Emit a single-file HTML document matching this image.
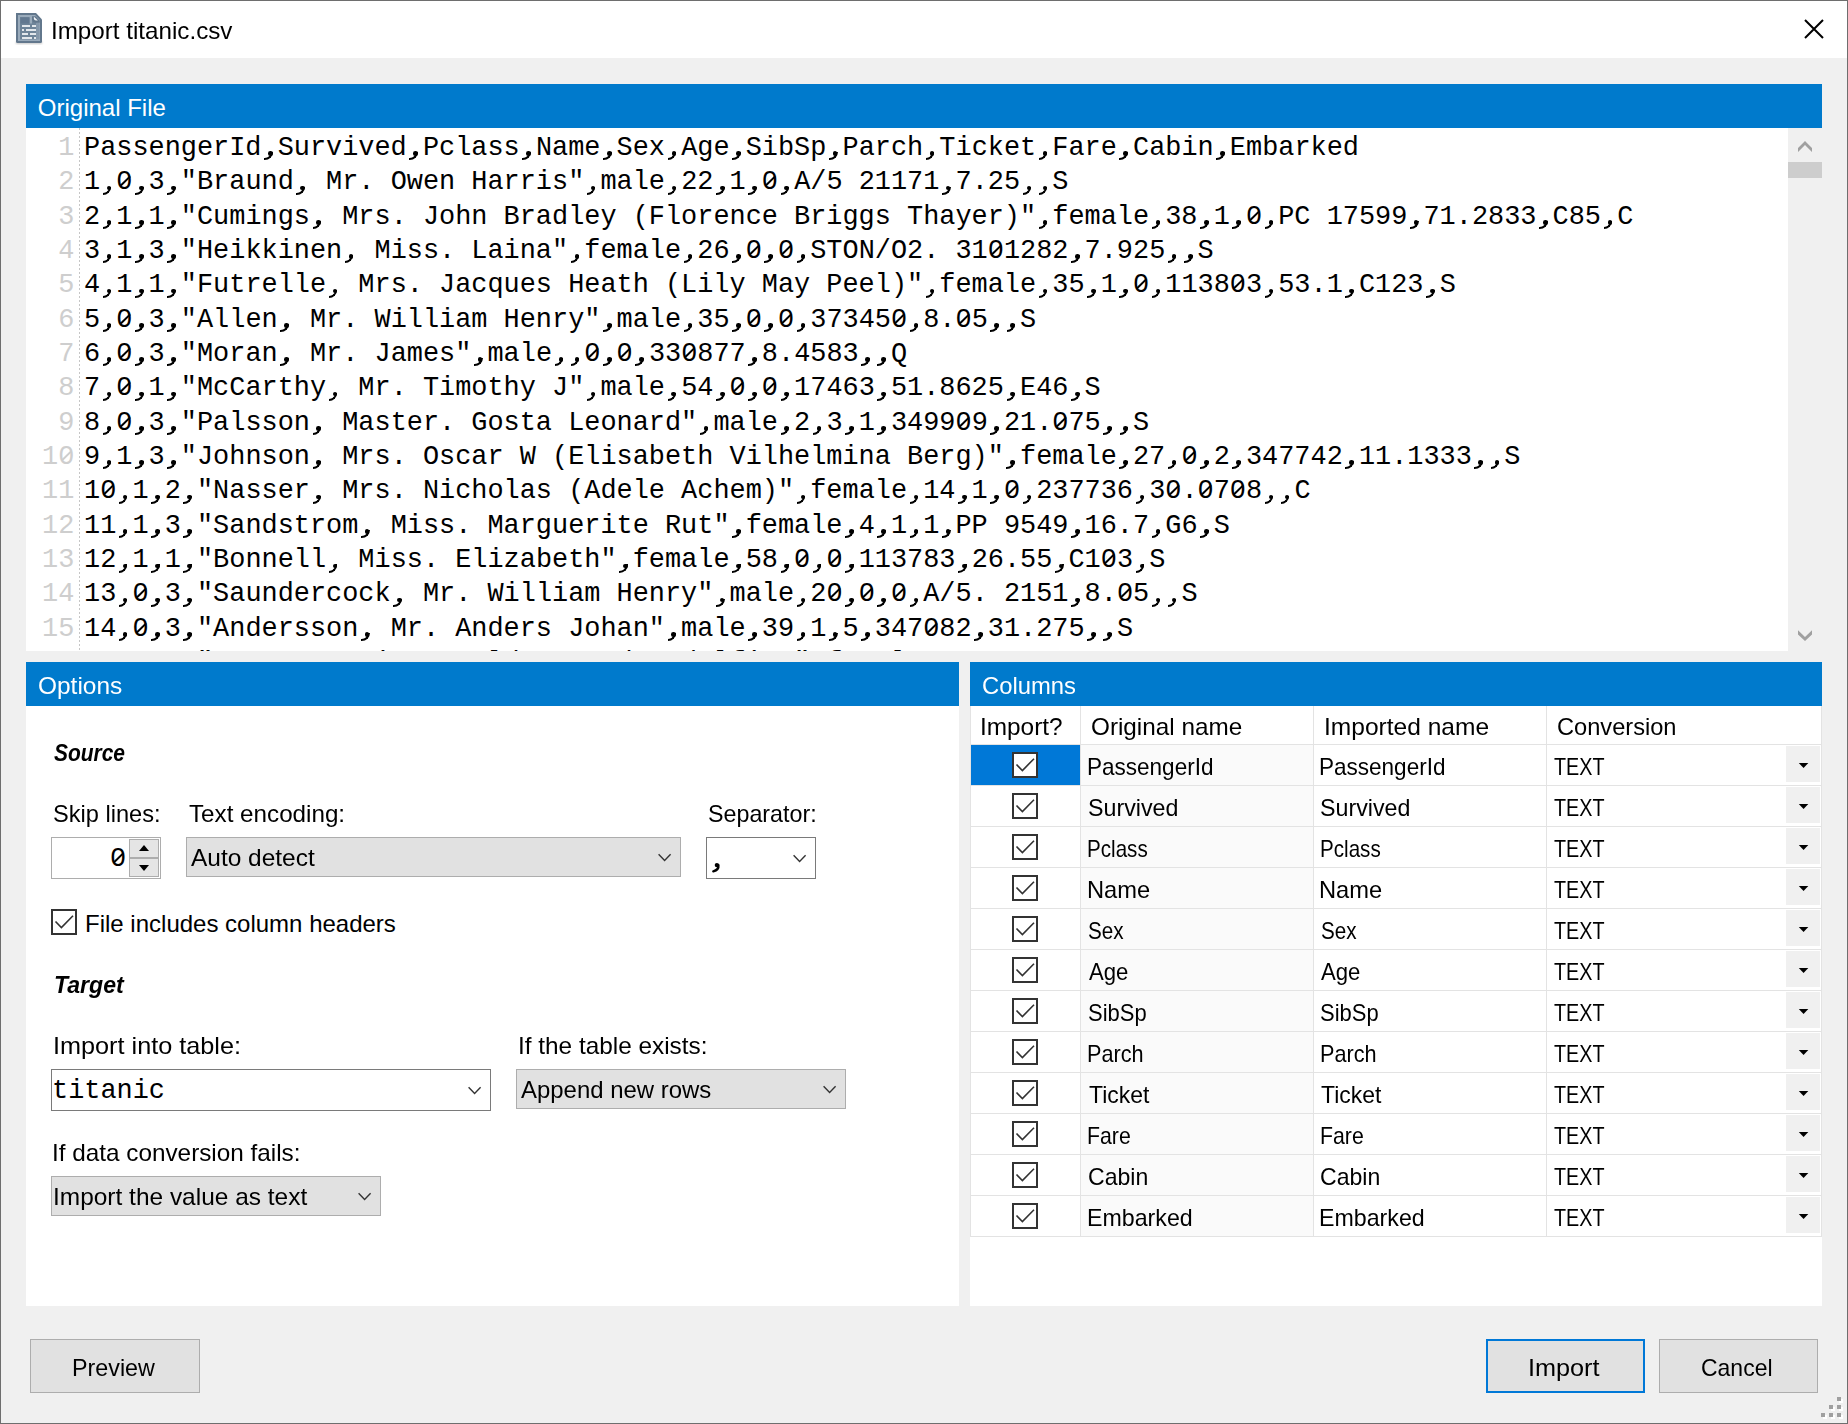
<!DOCTYPE html><html><head><meta charset="utf-8"><style>
*{margin:0;padding:0;box-sizing:border-box}
html,body{width:1848px;height:1424px;overflow:hidden;background:#f0f0f0}
.b{position:absolute}
.t{position:absolute;font-family:"Liberation Sans",sans-serif;font-size:24px;line-height:24px;white-space:nowrap;color:#000}
.m{position:absolute;font-family:"Liberation Mono",monospace;font-size:26.9px;line-height:34.34px;white-space:pre;color:#000}
.w{color:#fff}
.bi{font-weight:bold;font-style:italic}
.z{font-style:normal;position:relative}
.z::before{content:"";position:absolute;left:5.8px;top:9.6px;width:4.8px;height:6px;background:#fff}
.z::after{content:"";position:absolute;left:2.3px;top:12.95px;width:12.8px;height:2px;background:currentColor;transform:rotate(-44.5deg)}
.c{font-style:normal;position:relative;color:transparent}
.c::before{content:"";position:absolute;left:6.5px;top:18.4px;width:4.6px;height:4.6px;border-radius:50%;background:#000}
.c::after{content:"";position:absolute;left:2.6px;top:19.2px;width:8.6px;height:8.2px;box-sizing:border-box;border-right:2.5px solid #000;border-bottom:2.3px solid #000;border-bottom-right-radius:100% 100%}
</style></head><body><div class="b" style="left:0px;top:0px;width:1848px;height:1424px;border:1px solid #6e6e6e;background:#f0f0f0"></div>
<div class="b" style="left:1px;top:1px;width:1846px;height:57px;background:#fff"></div>
<svg class="b" style="left:0px;top:0px" width="50" height="50" viewBox="0 0 50 50">
<defs><filter id="sh" x="-20%" y="-20%" width="140%" height="140%"><feGaussianBlur stdDeviation="0.9"/></filter></defs>
<rect x="16" y="41" width="26" height="3" fill="#000" opacity="0.22" filter="url(#sh)"/>
<path d="M16 13 H36 L42 19.5 V41.5 Q42 43 40.5 43 H17.5 Q16 43 16 41.5 Z" fill="#62778c"/>
<path d="M18 15 H35.2 L40 20.2 V41 H18 Z" fill="#9aabbb"/>
<rect x="20" y="17" width="16.5" height="22.5" fill="#6e8499"/>
<rect x="36.5" y="23" width="3" height="16.5" fill="#8497aa"/>
<rect x="29.5" y="17" width="2.5" height="6.5" fill="#9aabbb"/>
<rect x="20.5" y="17.5" width="9" height="6" fill="#627890"/>
<path d="M32 16.3 H35.5 L39.8 20.8 V22.8 H36.5 Q32 22.8 32 18.5 Z" fill="#62778c"/>
<path d="M33.9 16.8 L37.9 20.6 H36 Q33.9 20.6 33.9 18.5 Z" fill="#f2f5f8"/>
<g fill="#e2e7ec">
<rect x="22" y="25" width="8" height="2"/><rect x="32" y="25" width="4" height="2"/>
<rect x="22" y="29" width="2" height="2"/><rect x="26" y="29" width="10" height="2"/>
<rect x="22" y="33" width="6" height="2"/><rect x="30" y="33" width="6" height="2"/>
<rect x="22" y="37" width="10" height="2"/><rect x="34" y="37" width="2" height="2"/></g>
</svg>
<div class="t " style="left:50.73px;top:19.00px;transform:scaleX(1.0077);transform-origin:0 0;">Import titanic.csv</div>
<svg class="b" style="left:1804px;top:19px" width="20" height="20" viewBox="0 0 20 20"><path d="M1 1L19 19M19 1L1 19" stroke="#000" stroke-width="2"/></svg>
<div class="b" style="left:26px;top:84px;width:1796px;height:44px;background:#007acc"></div>
<div class="t w" style="left:37.83px;top:96.00px;">Original File</div>
<div class="b" style="left:26px;top:128px;width:1762px;height:523px;background:#fff"></div>
<div class="b" style="left:1788px;top:128px;width:34px;height:523px;background:#f0f0f0"></div>
<svg class="b" style="left:1790px;top:135px" width="30" height="24" viewBox="1790 135 30 24"><path d="M1798 148L1805 141L1812 148V152L1805 145L1798 152Z" fill="#a0a0a0"/></svg>
<div class="b" style="left:1788px;top:162px;width:34px;height:16px;background:#cdcdcd"></div>
<svg class="b" style="left:1790px;top:625px" width="30" height="24" viewBox="1790 625 30 24"><path d="M1798 630.2L1805 637L1812 630.2V634.4L1805 641L1798 634.4Z" fill="#a0a0a0"/></svg>
<div class="b" style="left:26px;top:128px;width:1762px;height:523px;overflow:hidden">
<div class="m" style="left:16px;top:3px;color:#cecece"> 1
 2
 3
 4
 5
 6
 7
 8
 9
1<i class="z">0</i>
11
12
13
14
15
16</div>
<div class="m" style="left:58px;top:3px">PassengerId<i class="c">,</i>Survived<i class="c">,</i>Pclass<i class="c">,</i>Name<i class="c">,</i>Sex<i class="c">,</i>Age<i class="c">,</i>SibSp<i class="c">,</i>Parch<i class="c">,</i>Ticket<i class="c">,</i>Fare<i class="c">,</i>Cabin<i class="c">,</i>Embarked
1<i class="c">,</i><i class="z">0</i><i class="c">,</i>3<i class="c">,</i>&quot;Braund<i class="c">,</i> Mr. Owen Harris&quot;<i class="c">,</i>male<i class="c">,</i>22<i class="c">,</i>1<i class="c">,</i><i class="z">0</i><i class="c">,</i>A/5 21171<i class="c">,</i>7.25<i class="c">,</i><i class="c">,</i>S
2<i class="c">,</i>1<i class="c">,</i>1<i class="c">,</i>&quot;Cumings<i class="c">,</i> Mrs. John Bradley (Florence Briggs Thayer)&quot;<i class="c">,</i>female<i class="c">,</i>38<i class="c">,</i>1<i class="c">,</i><i class="z">0</i><i class="c">,</i>PC 17599<i class="c">,</i>71.2833<i class="c">,</i>C85<i class="c">,</i>C
3<i class="c">,</i>1<i class="c">,</i>3<i class="c">,</i>&quot;Heikkinen<i class="c">,</i> Miss. Laina&quot;<i class="c">,</i>female<i class="c">,</i>26<i class="c">,</i><i class="z">0</i><i class="c">,</i><i class="z">0</i><i class="c">,</i>STON/O2. 31<i class="z">0</i>1282<i class="c">,</i>7.925<i class="c">,</i><i class="c">,</i>S
4<i class="c">,</i>1<i class="c">,</i>1<i class="c">,</i>&quot;Futrelle<i class="c">,</i> Mrs. Jacques Heath (Lily May Peel)&quot;<i class="c">,</i>female<i class="c">,</i>35<i class="c">,</i>1<i class="c">,</i><i class="z">0</i><i class="c">,</i>1138<i class="z">0</i>3<i class="c">,</i>53.1<i class="c">,</i>C123<i class="c">,</i>S
5<i class="c">,</i><i class="z">0</i><i class="c">,</i>3<i class="c">,</i>&quot;Allen<i class="c">,</i> Mr. William Henry&quot;<i class="c">,</i>male<i class="c">,</i>35<i class="c">,</i><i class="z">0</i><i class="c">,</i><i class="z">0</i><i class="c">,</i>37345<i class="z">0</i><i class="c">,</i>8.<i class="z">0</i>5<i class="c">,</i><i class="c">,</i>S
6<i class="c">,</i><i class="z">0</i><i class="c">,</i>3<i class="c">,</i>&quot;Moran<i class="c">,</i> Mr. James&quot;<i class="c">,</i>male<i class="c">,</i><i class="c">,</i><i class="z">0</i><i class="c">,</i><i class="z">0</i><i class="c">,</i>33<i class="z">0</i>877<i class="c">,</i>8.4583<i class="c">,</i><i class="c">,</i>Q
7<i class="c">,</i><i class="z">0</i><i class="c">,</i>1<i class="c">,</i>&quot;McCarthy<i class="c">,</i> Mr. Timothy J&quot;<i class="c">,</i>male<i class="c">,</i>54<i class="c">,</i><i class="z">0</i><i class="c">,</i><i class="z">0</i><i class="c">,</i>17463<i class="c">,</i>51.8625<i class="c">,</i>E46<i class="c">,</i>S
8<i class="c">,</i><i class="z">0</i><i class="c">,</i>3<i class="c">,</i>&quot;Palsson<i class="c">,</i> Master. Gosta Leonard&quot;<i class="c">,</i>male<i class="c">,</i>2<i class="c">,</i>3<i class="c">,</i>1<i class="c">,</i>3499<i class="z">0</i>9<i class="c">,</i>21.<i class="z">0</i>75<i class="c">,</i><i class="c">,</i>S
9<i class="c">,</i>1<i class="c">,</i>3<i class="c">,</i>&quot;Johnson<i class="c">,</i> Mrs. Oscar W (Elisabeth Vilhelmina Berg)&quot;<i class="c">,</i>female<i class="c">,</i>27<i class="c">,</i><i class="z">0</i><i class="c">,</i>2<i class="c">,</i>347742<i class="c">,</i>11.1333<i class="c">,</i><i class="c">,</i>S
1<i class="z">0</i><i class="c">,</i>1<i class="c">,</i>2<i class="c">,</i>&quot;Nasser<i class="c">,</i> Mrs. Nicholas (Adele Achem)&quot;<i class="c">,</i>female<i class="c">,</i>14<i class="c">,</i>1<i class="c">,</i><i class="z">0</i><i class="c">,</i>237736<i class="c">,</i>3<i class="z">0</i>.<i class="z">0</i>7<i class="z">0</i>8<i class="c">,</i><i class="c">,</i>C
11<i class="c">,</i>1<i class="c">,</i>3<i class="c">,</i>&quot;Sandstrom<i class="c">,</i> Miss. Marguerite Rut&quot;<i class="c">,</i>female<i class="c">,</i>4<i class="c">,</i>1<i class="c">,</i>1<i class="c">,</i>PP 9549<i class="c">,</i>16.7<i class="c">,</i>G6<i class="c">,</i>S
12<i class="c">,</i>1<i class="c">,</i>1<i class="c">,</i>&quot;Bonnell<i class="c">,</i> Miss. Elizabeth&quot;<i class="c">,</i>female<i class="c">,</i>58<i class="c">,</i><i class="z">0</i><i class="c">,</i><i class="z">0</i><i class="c">,</i>113783<i class="c">,</i>26.55<i class="c">,</i>C1<i class="z">0</i>3<i class="c">,</i>S
13<i class="c">,</i><i class="z">0</i><i class="c">,</i>3<i class="c">,</i>&quot;Saundercock<i class="c">,</i> Mr. William Henry&quot;<i class="c">,</i>male<i class="c">,</i>2<i class="z">0</i><i class="c">,</i><i class="z">0</i><i class="c">,</i><i class="z">0</i><i class="c">,</i>A/5. 2151<i class="c">,</i>8.<i class="z">0</i>5<i class="c">,</i><i class="c">,</i>S
14<i class="c">,</i><i class="z">0</i><i class="c">,</i>3<i class="c">,</i>&quot;Andersson<i class="c">,</i> Mr. Anders Johan&quot;<i class="c">,</i>male<i class="c">,</i>39<i class="c">,</i>1<i class="c">,</i>5<i class="c">,</i>347<i class="z">0</i>82<i class="c">,</i>31.275<i class="c">,</i><i class="c">,</i>S
15<i class="c">,</i><i class="z">0</i><i class="c">,</i>3<i class="c">,</i>&quot;Vestrom<i class="c">,</i> Miss. Hulda Amanda Adolfina&quot;<i class="c">,</i>female<i class="c">,</i>14<i class="c">,</i><i class="z">0</i><i class="c">,</i><i class="z">0</i><i class="c">,</i>35<i class="z">0</i>4<i class="z">0</i>6<i class="c">,</i>7.8542<i class="c">,</i><i class="c">,</i>S</div>
<div class="b" style="left:53px;top:0px;width:1px;height:523px;background:repeating-linear-gradient(to bottom,#c6c6c6 0 2px,transparent 2px 4px)"></div>
</div>
<div class="b" style="left:26px;top:662px;width:933px;height:44px;background:#007acc"></div>
<div class="t w" style="left:38.22px;top:674.00px;transform:scaleX(1.0188);transform-origin:0 0;">Options</div>
<div class="b" style="left:26px;top:706px;width:933px;height:600px;background:#fff"></div>
<div class="t bi" style="left:54.16px;top:740.50px;transform:scaleX(0.8726);transform-origin:0 0;">Source</div>
<div class="t " style="left:53.15px;top:802.00px;transform:scaleX(0.9830);transform-origin:0 0;">Skip lines:</div>
<div class="t " style="left:189.16px;top:802.00px;transform:scaleX(1.0084);transform-origin:0 0;">Text encoding:</div>
<div class="t " style="left:708.19px;top:802.00px;transform:scaleX(0.9697);transform-origin:0 0;">Separator:</div>
<div class="b" style="left:51px;top:837px;width:110px;height:42px;background:#fff;border:1px solid #adadad"></div>
<div class="b" style="left:129px;top:839px;width:30px;height:19px;background:#e5e5e5;border:1px solid #adadad"></div>
<div class="b" style="left:129px;top:858px;width:30px;height:19px;background:#e5e5e5;border:1px solid #adadad"></div>
<svg class="b" style="left:139px;top:845px" width="10" height="6"><path d="M0 6L5 0L10 6Z" fill="#000"/></svg>
<svg class="b" style="left:139px;top:865px" width="10" height="6"><path d="M0 0L5 6L10 0Z" fill="#000"/></svg>
<div class="m" style="left:110px;top:842px;line-height:34.34px"><i class="z">0</i></div>
<div class="b" style="left:186px;top:837px;width:495px;height:40px;background:#e1e1e1;border:1px solid #adadad"></div>
<div class="t " style="left:190.82px;top:846.00px;transform:scaleX(1.0192);transform-origin:0 0;">Auto detect</div>
<svg class="b" style="left:658px;top:853px" width="14" height="9" viewBox="0 0 14 9"><path d="M0.6 1.3L6.6 7.5L12.6 1.3" fill="none" stroke="#333" stroke-width="1.4"/></svg>
<div class="b" style="left:706px;top:837px;width:110px;height:42px;background:#fff;border:1px solid #7a7a7a"></div>
<svg class="b" style="left:700px;top:840px" width="30" height="40" viewBox="700 840 30 40"><circle cx="716.9" cy="865.1" r="2.2" fill="#000"/><path d="M718.4 865.2 Q719 870 713.3 871.3" fill="none" stroke="#000" stroke-width="2.4" stroke-linecap="round"/></svg>
<svg class="b" style="left:793px;top:854px" width="14" height="9" viewBox="0 0 14 9"><path d="M0.6 1.3L6.6 7.5L12.6 1.3" fill="none" stroke="#333" stroke-width="1.4"/></svg>
<svg class="b" style="left:51px;top:909px" width="26" height="26" viewBox="0 0 26 26"><rect x="1" y="1" width="24" height="24" fill="#fff" stroke="#333" stroke-width="2"/><path d="M4.5 12.5L10.4 18.5L22 6.7" fill="none" stroke="#333" stroke-width="1.6"/></svg>
<div class="t " style="left:85.04px;top:911.50px;">File includes column headers</div>
<div class="t bi" style="left:53.82px;top:972.70px;transform:scaleX(0.9620);transform-origin:0 0;">Target</div>
<div class="t " style="left:52.75px;top:1033.60px;transform:scaleX(1.0514);transform-origin:0 0;">Import into table:</div>
<div class="t " style="left:517.70px;top:1033.80px;transform:scaleX(1.0142);transform-origin:0 0;">If the table exists:</div>
<div class="b" style="left:51px;top:1069px;width:440px;height:42px;background:#fff;border:1px solid #7a7a7a"></div>
<div class="m" style="left:52px;top:1074px">titanic</div>
<svg class="b" style="left:468px;top:1086px" width="14" height="9" viewBox="0 0 14 9"><path d="M0.6 1.3L6.6 7.5L12.6 1.3" fill="none" stroke="#333" stroke-width="1.4"/></svg>
<div class="b" style="left:516px;top:1069px;width:330px;height:40px;background:#e1e1e1;border:1px solid #adadad"></div>
<div class="t " style="left:520.50px;top:1078.00px;transform:scaleX(0.9974);transform-origin:0 0;">Append new rows</div>
<svg class="b" style="left:823px;top:1085px" width="14" height="9" viewBox="0 0 14 9"><path d="M0.6 1.3L6.6 7.5L12.6 1.3" fill="none" stroke="#333" stroke-width="1.4"/></svg>
<div class="t " style="left:52.35px;top:1140.50px;transform:scaleX(1.0124);transform-origin:0 0;">If data conversion fails:</div>
<div class="b" style="left:51px;top:1176px;width:330px;height:40px;background:#e1e1e1;border:1px solid #adadad"></div>
<div class="t " style="left:53.44px;top:1185.00px;transform:scaleX(1.0190);transform-origin:0 0;">Import the value as text</div>
<svg class="b" style="left:358px;top:1192px" width="14" height="9" viewBox="0 0 14 9"><path d="M0.6 1.3L6.6 7.5L12.6 1.3" fill="none" stroke="#333" stroke-width="1.4"/></svg>
<div class="b" style="left:970px;top:662px;width:852px;height:44px;background:#007acc"></div>
<div class="t w" style="left:982.24px;top:674.00px;transform:scaleX(0.9923);transform-origin:0 0;">Columns</div>
<div class="b" style="left:970px;top:706px;width:852px;height:600px;background:#fff"></div>
<div class="t " style="left:980.34px;top:715.20px;transform:scaleX(1.0153);transform-origin:0 0;">Import?</div>
<div class="t " style="left:1091.23px;top:715.20px;transform:scaleX(1.0116);transform-origin:0 0;">Original name</div>
<div class="t " style="left:1323.61px;top:715.20px;transform:scaleX(1.0229);transform-origin:0 0;">Imported name</div>
<div class="t " style="left:1557.17px;top:715.20px;transform:scaleX(0.9840);transform-origin:0 0;">Conversion</div>
<div class="b" style="left:1080px;top:706px;width:1px;height:38px;background:#e3e3e3"></div>
<div class="b" style="left:1313px;top:706px;width:1px;height:38px;background:#e3e3e3"></div>
<div class="b" style="left:1546px;top:706px;width:1px;height:38px;background:#e3e3e3"></div>
<div class="b" style="left:971px;top:744px;width:850px;height:1px;background:#e3e3e3"></div>
<div class="b" style="left:1821px;top:706px;width:1px;height:531px;background:#e3e3e3"></div>
<div class="b" style="left:970px;top:706px;width:1px;height:531px;background:#e3e3e3"></div>
<div class="b" style="left:1081px;top:745px;width:232px;height:40px;background:#fafafa"></div>
<div class="b" style="left:971px;top:745px;width:109px;height:40px;background:#0078d7"></div>
<div class="b" style="left:971px;top:785px;width:850px;height:1px;background:#e3e3e3"></div>
<div class="b" style="left:1080px;top:745px;width:1px;height:40px;background:#e3e3e3"></div>
<div class="b" style="left:1313px;top:745px;width:1px;height:40px;background:#e3e3e3"></div>
<div class="b" style="left:1546px;top:745px;width:1px;height:40px;background:#e3e3e3"></div>
<svg class="b" style="left:1012px;top:752px" width="26" height="26" viewBox="0 0 26 26"><rect x="1" y="1" width="24" height="24" fill="#fff" stroke="#333" stroke-width="2"/><path d="M4.5 12.5L10.4 18.5L22 6.7" fill="none" stroke="#333" stroke-width="1.6"/></svg>
<div class="t " style="left:1086.99px;top:754.60px;transform:scaleX(0.9384);transform-origin:0 0;">PassengerId</div>
<div class="t " style="left:1319.48px;top:754.60px;transform:scaleX(0.9384);transform-origin:0 0;">PassengerId</div>
<div class="t " style="left:1554.36px;top:754.60px;transform:scaleX(0.8232);transform-origin:0 0;">TEXT</div>
<div class="b" style="left:1786px;top:746px;width:34px;height:36px;background:#f0f0f0"></div>
<svg class="b" style="left:1798px;top:762px" width="12" height="7" viewBox="0 0 12 7"><path d="M0.8 0.9H10.3L5.55 6.1Z" fill="#000"/></svg>
<div class="b" style="left:1081px;top:786px;width:232px;height:40px;background:#fafafa"></div>
<div class="b" style="left:971px;top:826px;width:850px;height:1px;background:#e3e3e3"></div>
<div class="b" style="left:1080px;top:786px;width:1px;height:40px;background:#e3e3e3"></div>
<div class="b" style="left:1313px;top:786px;width:1px;height:40px;background:#e3e3e3"></div>
<div class="b" style="left:1546px;top:786px;width:1px;height:40px;background:#e3e3e3"></div>
<svg class="b" style="left:1012px;top:793px" width="26" height="26" viewBox="0 0 26 26"><rect x="1" y="1" width="24" height="24" fill="#fff" stroke="#333" stroke-width="2"/><path d="M4.5 12.5L10.4 18.5L22 6.7" fill="none" stroke="#333" stroke-width="1.6"/></svg>
<div class="t " style="left:1087.87px;top:795.60px;transform:scaleX(0.9682);transform-origin:0 0;">Survived</div>
<div class="t " style="left:1320.38px;top:795.60px;transform:scaleX(0.9682);transform-origin:0 0;">Survived</div>
<div class="t " style="left:1554.36px;top:795.60px;transform:scaleX(0.8232);transform-origin:0 0;">TEXT</div>
<div class="b" style="left:1786px;top:787px;width:34px;height:36px;background:#f0f0f0"></div>
<svg class="b" style="left:1798px;top:803px" width="12" height="7" viewBox="0 0 12 7"><path d="M0.8 0.9H10.3L5.55 6.1Z" fill="#000"/></svg>
<div class="b" style="left:1081px;top:827px;width:232px;height:40px;background:#fafafa"></div>
<div class="b" style="left:971px;top:867px;width:850px;height:1px;background:#e3e3e3"></div>
<div class="b" style="left:1080px;top:827px;width:1px;height:40px;background:#e3e3e3"></div>
<div class="b" style="left:1313px;top:827px;width:1px;height:40px;background:#e3e3e3"></div>
<div class="b" style="left:1546px;top:827px;width:1px;height:40px;background:#e3e3e3"></div>
<svg class="b" style="left:1012px;top:834px" width="26" height="26" viewBox="0 0 26 26"><rect x="1" y="1" width="24" height="24" fill="#fff" stroke="#333" stroke-width="2"/><path d="M4.5 12.5L10.4 18.5L22 6.7" fill="none" stroke="#333" stroke-width="1.6"/></svg>
<div class="t " style="left:1087.18px;top:836.60px;transform:scaleX(0.8588);transform-origin:0 0;">Pclass</div>
<div class="t " style="left:1319.60px;top:836.60px;transform:scaleX(0.8588);transform-origin:0 0;">Pclass</div>
<div class="t " style="left:1554.36px;top:836.60px;transform:scaleX(0.8232);transform-origin:0 0;">TEXT</div>
<div class="b" style="left:1786px;top:828px;width:34px;height:36px;background:#f0f0f0"></div>
<svg class="b" style="left:1798px;top:844px" width="12" height="7" viewBox="0 0 12 7"><path d="M0.8 0.9H10.3L5.55 6.1Z" fill="#000"/></svg>
<div class="b" style="left:1081px;top:868px;width:232px;height:40px;background:#fafafa"></div>
<div class="b" style="left:971px;top:908px;width:850px;height:1px;background:#e3e3e3"></div>
<div class="b" style="left:1080px;top:868px;width:1px;height:40px;background:#e3e3e3"></div>
<div class="b" style="left:1313px;top:868px;width:1px;height:40px;background:#e3e3e3"></div>
<div class="b" style="left:1546px;top:868px;width:1px;height:40px;background:#e3e3e3"></div>
<svg class="b" style="left:1012px;top:875px" width="26" height="26" viewBox="0 0 26 26"><rect x="1" y="1" width="24" height="24" fill="#fff" stroke="#333" stroke-width="2"/><path d="M4.5 12.5L10.4 18.5L22 6.7" fill="none" stroke="#333" stroke-width="1.6"/></svg>
<div class="t " style="left:1086.87px;top:877.60px;transform:scaleX(0.9871);transform-origin:0 0;">Name</div>
<div class="t " style="left:1319.39px;top:877.60px;transform:scaleX(0.9871);transform-origin:0 0;">Name</div>
<div class="t " style="left:1554.36px;top:877.60px;transform:scaleX(0.8232);transform-origin:0 0;">TEXT</div>
<div class="b" style="left:1786px;top:869px;width:34px;height:36px;background:#f0f0f0"></div>
<svg class="b" style="left:1798px;top:885px" width="12" height="7" viewBox="0 0 12 7"><path d="M0.8 0.9H10.3L5.55 6.1Z" fill="#000"/></svg>
<div class="b" style="left:1081px;top:909px;width:232px;height:40px;background:#fafafa"></div>
<div class="b" style="left:971px;top:949px;width:850px;height:1px;background:#e3e3e3"></div>
<div class="b" style="left:1080px;top:909px;width:1px;height:40px;background:#e3e3e3"></div>
<div class="b" style="left:1313px;top:909px;width:1px;height:40px;background:#e3e3e3"></div>
<div class="b" style="left:1546px;top:909px;width:1px;height:40px;background:#e3e3e3"></div>
<svg class="b" style="left:1012px;top:916px" width="26" height="26" viewBox="0 0 26 26"><rect x="1" y="1" width="24" height="24" fill="#fff" stroke="#333" stroke-width="2"/><path d="M4.5 12.5L10.4 18.5L22 6.7" fill="none" stroke="#333" stroke-width="1.6"/></svg>
<div class="t " style="left:1088.04px;top:918.60px;transform:scaleX(0.8603);transform-origin:0 0;">Sex</div>
<div class="t " style="left:1320.51px;top:918.60px;transform:scaleX(0.8603);transform-origin:0 0;">Sex</div>
<div class="t " style="left:1554.36px;top:918.60px;transform:scaleX(0.8232);transform-origin:0 0;">TEXT</div>
<div class="b" style="left:1786px;top:910px;width:34px;height:36px;background:#f0f0f0"></div>
<svg class="b" style="left:1798px;top:926px" width="12" height="7" viewBox="0 0 12 7"><path d="M0.8 0.9H10.3L5.55 6.1Z" fill="#000"/></svg>
<div class="b" style="left:1081px;top:950px;width:232px;height:40px;background:#fafafa"></div>
<div class="b" style="left:971px;top:990px;width:850px;height:1px;background:#e3e3e3"></div>
<div class="b" style="left:1080px;top:950px;width:1px;height:40px;background:#e3e3e3"></div>
<div class="b" style="left:1313px;top:950px;width:1px;height:40px;background:#e3e3e3"></div>
<div class="b" style="left:1546px;top:950px;width:1px;height:40px;background:#e3e3e3"></div>
<svg class="b" style="left:1012px;top:957px" width="26" height="26" viewBox="0 0 26 26"><rect x="1" y="1" width="24" height="24" fill="#fff" stroke="#333" stroke-width="2"/><path d="M4.5 12.5L10.4 18.5L22 6.7" fill="none" stroke="#333" stroke-width="1.6"/></svg>
<div class="t " style="left:1088.85px;top:959.60px;transform:scaleX(0.9215);transform-origin:0 0;">Age</div>
<div class="t " style="left:1321.36px;top:959.60px;transform:scaleX(0.9215);transform-origin:0 0;">Age</div>
<div class="t " style="left:1554.36px;top:959.60px;transform:scaleX(0.8232);transform-origin:0 0;">TEXT</div>
<div class="b" style="left:1786px;top:951px;width:34px;height:36px;background:#f0f0f0"></div>
<svg class="b" style="left:1798px;top:967px" width="12" height="7" viewBox="0 0 12 7"><path d="M0.8 0.9H10.3L5.55 6.1Z" fill="#000"/></svg>
<div class="b" style="left:1081px;top:991px;width:232px;height:40px;background:#fafafa"></div>
<div class="b" style="left:971px;top:1031px;width:850px;height:1px;background:#e3e3e3"></div>
<div class="b" style="left:1080px;top:991px;width:1px;height:40px;background:#e3e3e3"></div>
<div class="b" style="left:1313px;top:991px;width:1px;height:40px;background:#e3e3e3"></div>
<div class="b" style="left:1546px;top:991px;width:1px;height:40px;background:#e3e3e3"></div>
<svg class="b" style="left:1012px;top:998px" width="26" height="26" viewBox="0 0 26 26"><rect x="1" y="1" width="24" height="24" fill="#fff" stroke="#333" stroke-width="2"/><path d="M4.5 12.5L10.4 18.5L22 6.7" fill="none" stroke="#333" stroke-width="1.6"/></svg>
<div class="t " style="left:1087.98px;top:1000.60px;transform:scaleX(0.9149);transform-origin:0 0;">SibSp</div>
<div class="t " style="left:1320.45px;top:1000.60px;transform:scaleX(0.9149);transform-origin:0 0;">SibSp</div>
<div class="t " style="left:1554.36px;top:1000.60px;transform:scaleX(0.8232);transform-origin:0 0;">TEXT</div>
<div class="b" style="left:1786px;top:992px;width:34px;height:36px;background:#f0f0f0"></div>
<svg class="b" style="left:1798px;top:1008px" width="12" height="7" viewBox="0 0 12 7"><path d="M0.8 0.9H10.3L5.55 6.1Z" fill="#000"/></svg>
<div class="b" style="left:1081px;top:1032px;width:232px;height:40px;background:#fafafa"></div>
<div class="b" style="left:971px;top:1072px;width:850px;height:1px;background:#e3e3e3"></div>
<div class="b" style="left:1080px;top:1032px;width:1px;height:40px;background:#e3e3e3"></div>
<div class="b" style="left:1313px;top:1032px;width:1px;height:40px;background:#e3e3e3"></div>
<div class="b" style="left:1546px;top:1032px;width:1px;height:40px;background:#e3e3e3"></div>
<svg class="b" style="left:1012px;top:1039px" width="26" height="26" viewBox="0 0 26 26"><rect x="1" y="1" width="24" height="24" fill="#fff" stroke="#333" stroke-width="2"/><path d="M4.5 12.5L10.4 18.5L22 6.7" fill="none" stroke="#333" stroke-width="1.6"/></svg>
<div class="t " style="left:1087.07px;top:1041.60px;transform:scaleX(0.9020);transform-origin:0 0;">Parch</div>
<div class="t " style="left:1319.58px;top:1041.60px;transform:scaleX(0.9020);transform-origin:0 0;">Parch</div>
<div class="t " style="left:1554.36px;top:1041.60px;transform:scaleX(0.8232);transform-origin:0 0;">TEXT</div>
<div class="b" style="left:1786px;top:1033px;width:34px;height:36px;background:#f0f0f0"></div>
<svg class="b" style="left:1798px;top:1049px" width="12" height="7" viewBox="0 0 12 7"><path d="M0.8 0.9H10.3L5.55 6.1Z" fill="#000"/></svg>
<div class="b" style="left:1081px;top:1073px;width:232px;height:40px;background:#fafafa"></div>
<div class="b" style="left:971px;top:1113px;width:850px;height:1px;background:#e3e3e3"></div>
<div class="b" style="left:1080px;top:1073px;width:1px;height:40px;background:#e3e3e3"></div>
<div class="b" style="left:1313px;top:1073px;width:1px;height:40px;background:#e3e3e3"></div>
<div class="b" style="left:1546px;top:1073px;width:1px;height:40px;background:#e3e3e3"></div>
<svg class="b" style="left:1012px;top:1080px" width="26" height="26" viewBox="0 0 26 26"><rect x="1" y="1" width="24" height="24" fill="#fff" stroke="#333" stroke-width="2"/><path d="M4.5 12.5L10.4 18.5L22 6.7" fill="none" stroke="#333" stroke-width="1.6"/></svg>
<div class="t " style="left:1088.82px;top:1082.60px;transform:scaleX(0.9558);transform-origin:0 0;">Ticket</div>
<div class="t " style="left:1321.34px;top:1082.60px;transform:scaleX(0.9558);transform-origin:0 0;">Ticket</div>
<div class="t " style="left:1554.36px;top:1082.60px;transform:scaleX(0.8232);transform-origin:0 0;">TEXT</div>
<div class="b" style="left:1786px;top:1074px;width:34px;height:36px;background:#f0f0f0"></div>
<svg class="b" style="left:1798px;top:1090px" width="12" height="7" viewBox="0 0 12 7"><path d="M0.8 0.9H10.3L5.55 6.1Z" fill="#000"/></svg>
<div class="b" style="left:1081px;top:1114px;width:232px;height:40px;background:#fafafa"></div>
<div class="b" style="left:971px;top:1154px;width:850px;height:1px;background:#e3e3e3"></div>
<div class="b" style="left:1080px;top:1114px;width:1px;height:40px;background:#e3e3e3"></div>
<div class="b" style="left:1313px;top:1114px;width:1px;height:40px;background:#e3e3e3"></div>
<div class="b" style="left:1546px;top:1114px;width:1px;height:40px;background:#e3e3e3"></div>
<svg class="b" style="left:1012px;top:1121px" width="26" height="26" viewBox="0 0 26 26"><rect x="1" y="1" width="24" height="24" fill="#fff" stroke="#333" stroke-width="2"/><path d="M4.5 12.5L10.4 18.5L22 6.7" fill="none" stroke="#333" stroke-width="1.6"/></svg>
<div class="t " style="left:1087.10px;top:1123.60px;transform:scaleX(0.8856);transform-origin:0 0;">Fare</div>
<div class="t " style="left:1319.60px;top:1123.60px;transform:scaleX(0.8856);transform-origin:0 0;">Fare</div>
<div class="t " style="left:1554.36px;top:1123.60px;transform:scaleX(0.8232);transform-origin:0 0;">TEXT</div>
<div class="b" style="left:1786px;top:1115px;width:34px;height:36px;background:#f0f0f0"></div>
<svg class="b" style="left:1798px;top:1131px" width="12" height="7" viewBox="0 0 12 7"><path d="M0.8 0.9H10.3L5.55 6.1Z" fill="#000"/></svg>
<div class="b" style="left:1081px;top:1155px;width:232px;height:40px;background:#fafafa"></div>
<div class="b" style="left:971px;top:1195px;width:850px;height:1px;background:#e3e3e3"></div>
<div class="b" style="left:1080px;top:1155px;width:1px;height:40px;background:#e3e3e3"></div>
<div class="b" style="left:1313px;top:1155px;width:1px;height:40px;background:#e3e3e3"></div>
<div class="b" style="left:1546px;top:1155px;width:1px;height:40px;background:#e3e3e3"></div>
<svg class="b" style="left:1012px;top:1162px" width="26" height="26" viewBox="0 0 26 26"><rect x="1" y="1" width="24" height="24" fill="#fff" stroke="#333" stroke-width="2"/><path d="M4.5 12.5L10.4 18.5L22 6.7" fill="none" stroke="#333" stroke-width="1.6"/></svg>
<div class="t " style="left:1087.89px;top:1164.60px;transform:scaleX(0.9601);transform-origin:0 0;">Cabin</div>
<div class="t " style="left:1320.39px;top:1164.60px;transform:scaleX(0.9601);transform-origin:0 0;">Cabin</div>
<div class="t " style="left:1554.36px;top:1164.60px;transform:scaleX(0.8232);transform-origin:0 0;">TEXT</div>
<div class="b" style="left:1786px;top:1156px;width:34px;height:36px;background:#f0f0f0"></div>
<svg class="b" style="left:1798px;top:1172px" width="12" height="7" viewBox="0 0 12 7"><path d="M0.8 0.9H10.3L5.55 6.1Z" fill="#000"/></svg>
<div class="b" style="left:1081px;top:1196px;width:232px;height:40px;background:#fafafa"></div>
<div class="b" style="left:971px;top:1236px;width:850px;height:1px;background:#e3e3e3"></div>
<div class="b" style="left:1080px;top:1196px;width:1px;height:40px;background:#e3e3e3"></div>
<div class="b" style="left:1313px;top:1196px;width:1px;height:40px;background:#e3e3e3"></div>
<div class="b" style="left:1546px;top:1196px;width:1px;height:40px;background:#e3e3e3"></div>
<svg class="b" style="left:1012px;top:1203px" width="26" height="26" viewBox="0 0 26 26"><rect x="1" y="1" width="24" height="24" fill="#fff" stroke="#333" stroke-width="2"/><path d="M4.5 12.5L10.4 18.5L22 6.7" fill="none" stroke="#333" stroke-width="1.6"/></svg>
<div class="t " style="left:1086.95px;top:1205.60px;transform:scaleX(0.9660);transform-origin:0 0;">Embarked</div>
<div class="t " style="left:1319.41px;top:1205.60px;transform:scaleX(0.9660);transform-origin:0 0;">Embarked</div>
<div class="t " style="left:1554.36px;top:1205.60px;transform:scaleX(0.8232);transform-origin:0 0;">TEXT</div>
<div class="b" style="left:1786px;top:1197px;width:34px;height:36px;background:#f0f0f0"></div>
<svg class="b" style="left:1798px;top:1213px" width="12" height="7" viewBox="0 0 12 7"><path d="M0.8 0.9H10.3L5.55 6.1Z" fill="#000"/></svg>
<div class="b" style="left:30px;top:1339px;width:170px;height:54px;background:#e1e1e1;border:1px solid #adadad"></div>
<div class="t " style="left:72.02px;top:1356.00px;transform:scaleX(0.9711);transform-origin:0 0;">Preview</div>
<div class="b" style="left:1486px;top:1339px;width:159px;height:54px;background:#e1e1e1;border:2px solid #0078d7"></div>
<div class="t " style="left:1527.93px;top:1356.00px;transform:scaleX(1.0514);transform-origin:0 0;">Import</div>
<div class="b" style="left:1659px;top:1339px;width:159px;height:54px;background:#e1e1e1;border:1px solid #adadad"></div>
<div class="t " style="left:1701.18px;top:1356.00px;transform:scaleX(0.9572);transform-origin:0 0;">Cancel</div>
<div class="b" style="left:1839px;top:1399px;width:4px;height:4px;background:#fff"></div>
<div class="b" style="left:1831px;top:1407px;width:4px;height:4px;background:#fff"></div>
<div class="b" style="left:1839px;top:1407px;width:4px;height:4px;background:#fff"></div>
<div class="b" style="left:1823px;top:1415px;width:4px;height:4px;background:#fff"></div>
<div class="b" style="left:1831px;top:1415px;width:4px;height:4px;background:#fff"></div>
<div class="b" style="left:1839px;top:1415px;width:4px;height:4px;background:#fff"></div>
<div class="b" style="left:1837px;top:1397px;width:4px;height:4px;background:#a0a0a0"></div>
<div class="b" style="left:1829px;top:1405px;width:4px;height:4px;background:#a0a0a0"></div>
<div class="b" style="left:1837px;top:1405px;width:4px;height:4px;background:#a0a0a0"></div>
<div class="b" style="left:1821px;top:1413px;width:4px;height:4px;background:#a0a0a0"></div>
<div class="b" style="left:1829px;top:1413px;width:4px;height:4px;background:#a0a0a0"></div>
<div class="b" style="left:1837px;top:1413px;width:4px;height:4px;background:#a0a0a0"></div></body></html>
